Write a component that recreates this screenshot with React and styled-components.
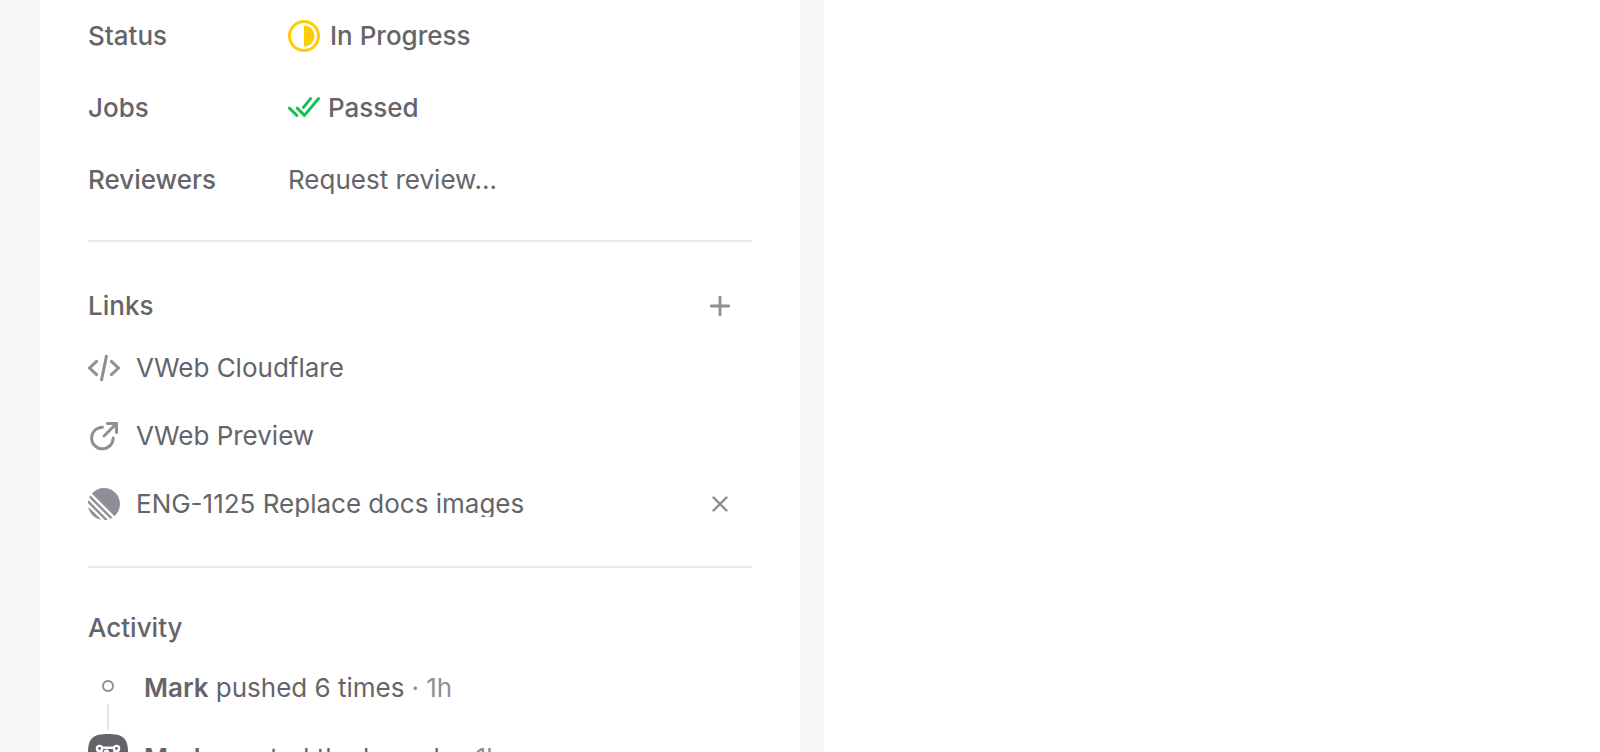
import React from "react";
import styled, { createGlobalStyle, ThemeProvider } from "styled-components";

const theme = {
  background: "#f7f7f7",
  surface: "#ffffff",
  text: "#656569",
  muted: "#8e8e96",
  border: "#ebebeb",
  yellow: "#ffcc00",
  green: "#12bf50",
};

const GlobalStyle = createGlobalStyle`
  * {
    box-sizing: border-box;
  }

  body {
    margin: 0;
    font-family: Inter, "Liberation Sans", sans-serif;
    font-size: 26px;
    line-height: 32px;
    color: ${theme.text};
    background-color: ${theme.background};
  }
`;

const Page = styled.div`
  display: grid;
  grid-template-columns: minmax(0, 760fr) minmax(0, 776fr);
  gap: 24px;
  height: 100vh;
  padding-left: 40px;
  overflow: hidden;
`;

const Sidebar = styled.aside`
  padding: 0 48px;
  background-color: ${(props) => props.theme.surface};
`;

const Content = styled.main`
  background-color: ${(props) => props.theme.surface};
`;

const Section = styled.section`
  padding: ${(props) => props.$padding || "0"};
  border-bottom: ${(props) =>
    props.$last ? "none" : `2px solid ${props.theme.border}`};
`;

const Properties = styled.dl`
  margin: 0;
`;

const Property = styled.div`
  display: grid;
  grid-template-columns: 200px 1fr;
  align-items: center;
  height: 72px;
`;

const PropertyName = styled.dt`
  font-weight: 500;
`;

const PropertyValue = styled.dd`
  display: flex;
  align-items: center;
  gap: ${(props) => props.$gap || "8px"};
  margin: 0;
  font-weight: 500;
`;

const Button = styled.button`
  display: flex;
  align-items: center;
  padding: 0;
  border: 0;
  background: none;
  color: inherit;
  font: inherit;
  font-weight: 400;
  cursor: pointer;
`;

const IconButton = styled(Button)`
  justify-content: center;
  width: 64px;
  height: 48px;
  color: ${(props) => props.theme.muted};
`;

const SectionHeader = styled.header`
  display: flex;
  align-items: center;
  justify-content: space-between;
  height: ${(props) => props.$height};
`;

const Title = styled.h2`
  margin: 0;
  font-size: 26px;
  font-weight: 500;
`;

const List = styled.ul`
  margin: 0;
  padding: 0;
  list-style: none;
`;

const LinkRow = styled.li`
  display: flex;
  align-items: center;
  justify-content: space-between;
  height: 68px;
`;

const ItemLink = styled.a`
  display: flex;
  align-items: center;
  gap: 16px;
  min-width: 0;
  color: inherit;
  text-decoration: none;

  svg {
    flex: none;
    color: ${(props) => props.theme.muted};
  }
`;

const LinkLabel = styled.span`
  overflow: hidden;
  line-height: 26px;
  white-space: nowrap;
  text-overflow: ellipsis;
`;

const ActivityRow = styled.li`
  display: grid;
  grid-template-columns: 40px 1fr;
  column-gap: 16px;
  height: 70px;
`;

const Timeline = styled.div`
  display: flex;
  flex-direction: column;
  align-items: center;
  gap: 12px;
  padding-top: ${(props) => props.$top};
`;

const Dot = styled.span`
  width: 12px;
  height: 12px;
  border: 2px solid ${(props) => props.theme.muted};
  border-radius: 50%;
`;

const Connector = styled.span`
  width: 2px;
  height: 26px;
  background-color: #e3e3e5;
`;

const ActivityText = styled.div`
  display: flex;
  gap: ${(props) => props.$gap || "7px"};
  padding-top: 20px;
`;

const Message = styled.p`
  margin: 0;
`;

const Author = styled.strong`
  font-weight: 600;
`;

const Time = styled.time`
  color: ${(props) => props.theme.muted};
`;

function InProgressIcon() {
  return (
    <svg width="32" height="32" viewBox="0 0 32 32" aria-hidden="true">
      <circle cx="16" cy="16" r="14.5" fill="none" stroke={theme.yellow} strokeWidth="3" />
      <path d="M16 5.5a10.5 10.5 0 0 1 0 21Z" fill={theme.yellow} />
    </svg>
  );
}

function PassedIcon() {
  return (
    <svg
      width="32"
      height="22"
      viewBox="0 0 32 22"
      fill="none"
      stroke={theme.green}
      strokeWidth="3"
      strokeLinecap="round"
      strokeLinejoin="round"
      aria-hidden="true"
    >
      <path d="M1.5 11.2 8.8 18.4M9.4 11.2l7 7.2L30.5 1.6M22.6 1.6l-7.2 8.8" />
    </svg>
  );
}

function CodeIcon() {
  return (
    <svg
      width="32"
      height="32"
      viewBox="0 0 32 32"
      fill="none"
      stroke="currentColor"
      strokeWidth="3"
      strokeLinecap="round"
      strokeLinejoin="round"
      aria-hidden="true"
    >
      <path d="M8.6 9.4 1.5 16l7.1 6.6M23.4 9.4l7.1 6.6-7.1 6.6M18.4 4.2l-4.8 23.6" />
    </svg>
  );
}

function ExternalIcon() {
  return (
    <svg
      width="32"
      height="32"
      viewBox="0 0 32 32"
      fill="none"
      stroke="currentColor"
      strokeWidth="3"
      strokeLinecap="round"
      aria-hidden="true"
    >
      <path d="M14.5 7.2A10.8 10.8 0 1 0 25.2 18M16 16 27 5" />
      <path d="M19.5 3.5h9v9" />
    </svg>
  );
}

function LinearIcon() {
  return (
    <svg width="32" height="32" viewBox="0 0 100 100" fill="currentColor" aria-hidden="true">
      <path d="M1.22541 61.5228c-.2225-.9485.90748-1.5459 1.59638-.857L39.3342 97.1782c.6889.6889.0915 1.8189-.857 1.5964C20.0515 94.4522 5.54779 79.9485 1.22541 61.5228ZM.00189135 46.8891c-.01764375.2833.08887215.5599.28957165.7606L52.3503 99.7085c.2007.2007.4773.3075.7606.2896 2.3692-.1476 4.6938-.46 6.9624-.9259.7645-.157 1.0301-1.0963.4782-1.6481L2.57595 39.4485c-.55186-.5519-1.49117-.2863-1.648174.4782-.465915 2.2686-.77832 4.5932-.92588465 6.9624ZM4.21093 29.7054c-.16649.3738-.08169.8106.20765 1.1l64.77602 64.776c.2894.2894.7262.3742 1.1.2077 1.7861-.7956 3.5171-1.6927 5.1855-2.684.5521-.328.6373-1.0867.1832-1.5407L8.43566 24.3367c-.45409-.4541-1.21271-.3689-1.54074.1832-.99132 1.6684-1.88843 3.3994-2.68399 5.1855ZM12.6587 18.074c-.3701-.3701-.393-.9637-.0443-1.3541C21.7795 6.45931 35.1114 0 49.9519 0 77.5927 0 100 22.4073 100 50.0481c0 14.8405-6.4593 28.1724-16.7199 37.3375-.3903.3487-.984.3258-1.3542-.0443L12.6587 18.074Z" />
    </svg>
  );
}

function PlusIcon() {
  return (
    <svg width="20" height="20" viewBox="0 0 20 20" stroke="currentColor" strokeWidth="2.8" strokeLinecap="round" aria-hidden="true">
      <path d="M10 1.2v17.6M1.2 10h17.6" />
    </svg>
  );
}

function CloseIcon() {
  return (
    <svg width="16" height="16" viewBox="0 0 16 16" stroke="currentColor" strokeWidth="2.4" strokeLinecap="round" aria-hidden="true">
      <path d="m1.5 1.5 13 13M14.5 1.5l-13 13" />
    </svg>
  );
}

function BranchAvatar() {
  return (
    <svg width="40" height="40" viewBox="0 0 40 40" aria-hidden="true">
      <path
        d="M20 0c14.5 0 20 4 20 18v4c0 14-5.5 18-20 18S0 36 0 22v-4C0 4 5.5 0 20 0Z"
        fill={theme.text}
      />
      <g fill="none" stroke="#fff" strokeWidth="2.4">
        <circle cx="11.5" cy="14.5" r="2.6" />
        <circle cx="28.5" cy="14.5" r="2.6" />
        <circle cx="20" cy="28.5" r="2.6" />
        <path d="M14 13.8h12M13 17l5.4 8.6M27 17l-5.4 8.6" />
      </g>
      <path d="m16 17.500 3-1 3.500 4" fill="none" stroke="#fff" strokeWidth="2" />
    </svg>
  );
}

export default function App() {
  return (
    <ThemeProvider theme={theme}>
      <GlobalStyle />
      <Page>
        <Sidebar>
          <Section $padding="0 0 24px">
            <Properties>
              <Property>
                <PropertyName>Status</PropertyName>
                <PropertyValue $gap="10px">
                  <InProgressIcon />
                  In Progress
                </PropertyValue>
              </Property>
              <Property>
                <PropertyName>Jobs</PropertyName>
                <PropertyValue>
                  <PassedIcon />
                  Passed
                </PropertyValue>
              </Property>
              <Property>
                <PropertyName>Reviewers</PropertyName>
                <PropertyValue>
                  <Button type="button">Request review...</Button>
                </PropertyValue>
              </Property>
            </Properties>
          </Section>

          <Section $padding="36px 0 28px">
            <SectionHeader $height="56px">
              <Title>Links</Title>
              <IconButton type="button" aria-label="Add link">
                <PlusIcon />
              </IconButton>
            </SectionHeader>
            <List>
              <LinkRow>
                <ItemLink href="#cloudflare">
                  <CodeIcon />
                  <LinkLabel>VWeb Cloudflare</LinkLabel>
                </ItemLink>
              </LinkRow>
              <LinkRow>
                <ItemLink href="#preview">
                  <ExternalIcon />
                  <LinkLabel>VWeb Preview</LinkLabel>
                </ItemLink>
              </LinkRow>
              <LinkRow>
                <ItemLink href="#eng-1125">
                  <LinearIcon />
                  <LinkLabel>ENG-1125 Replace docs images</LinkLabel>
                </ItemLink>
                <IconButton type="button" aria-label="Remove link">
                  <CloseIcon />
                </IconButton>
              </LinkRow>
            </List>
          </Section>

          <Section $padding="36px 0 0" $last>
            <SectionHeader $height="48px">
              <Title>Activity</Title>
            </SectionHeader>
            <List>
              <ActivityRow>
                <Timeline $top="28px">
                  <Dot />
                  <Connector />
                </Timeline>
                <ActivityText>
                  <Message>
                    <Author>Mark</Author> pushed 6 times
                  </Message>
                  <Time>· 1h</Time>
                </ActivityText>
              </ActivityRow>
              <ActivityRow>
                <Timeline $top="12px">
                  <BranchAvatar />
                </Timeline>
                <ActivityText $gap="12px">
                  <Message>
                    <Author>Mark</Author> created the branch
                  </Message>
                  <Time>· 1h</Time>
                </ActivityText>
              </ActivityRow>
            </List>
          </Section>
        </Sidebar>
        <Content />
      </Page>
    </ThemeProvider>
  );
}
